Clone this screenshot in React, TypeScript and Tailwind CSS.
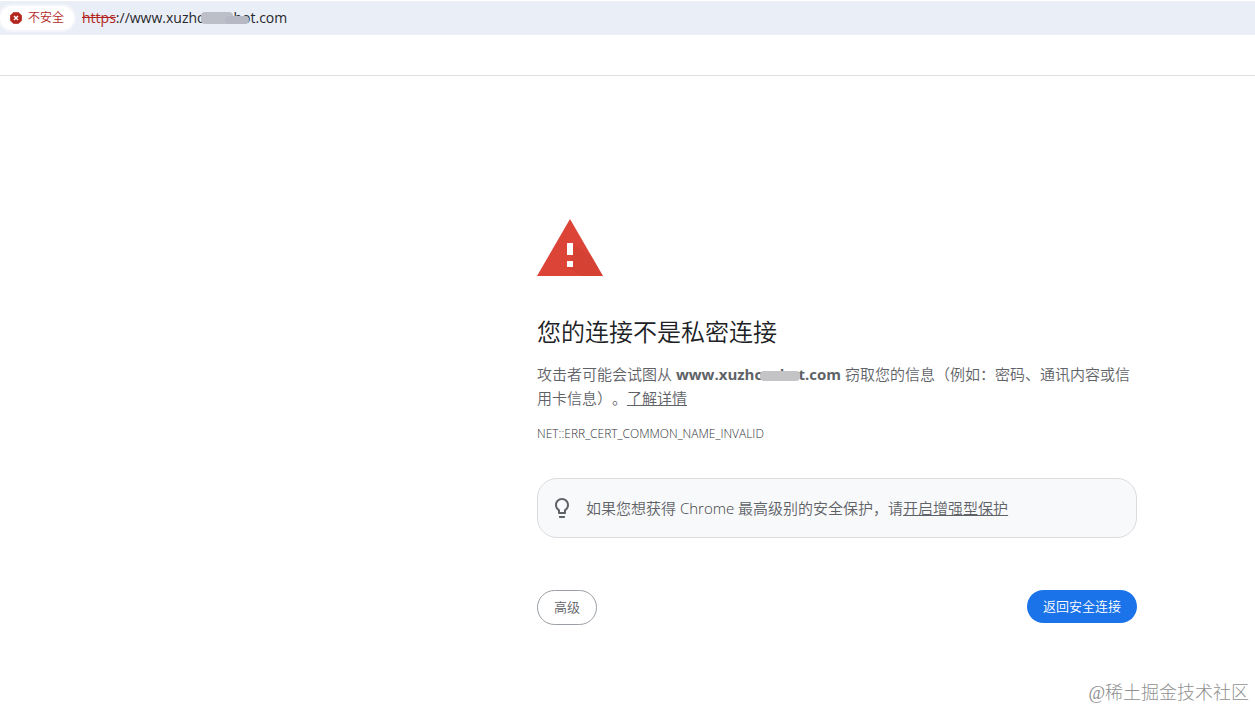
import React from 'react';

const bodyFont = "font-['Open_Sans','Noto_Sans_CJK_SC',sans-serif]";

function AddressBar() {
  return (
    <header className="border-b border-[#dfe0e3] pb-10 pt-px">
      <div className="flex h-[34px] items-center bg-[#eaeef7]">
        <button
          type="button"
          className="flex h-6 shrink-0 items-center gap-1.5 rounded-full bg-white pl-2.5 pr-2.5 text-xs font-[350] text-[#b3261e] ring-2 ring-[#f3f5fa]"
        >
          <svg viewBox="0 0 12 12" className="h-3 w-3" aria-hidden="true">
            <path
              d="M3.6 0.2h4.8l3.4 3.4v4.8l-3.4 3.4H3.6L0.2 8.4V3.6z"
              fill="#b3261e"
              stroke="#b3261e"
              strokeWidth="0.4"
              strokeLinejoin="round"
            />
            <path d="M4 4l4 4M8 4l-4 4" stroke="#fff" strokeWidth="1.4" />
          </svg>
          不安全
        </button>
        <p className="flex items-center pl-2 text-sm text-[#26282b]">
          <span className="text-[#b3261e] line-through">https</span>
          <span>://www.xuzho</span>
          <span className="relative -ml-1 -mr-4 h-3 w-12">
            <span className="absolute left-0 top-0 h-3 w-8 rounded-sm bg-[#bcbfc8]" />
            <span className="absolute left-6 top-1 h-2 w-6 rounded-sm bg-[#b6b9c3]" />
          </span>
          <span>bot.com</span>
        </p>
      </div>
    </header>
  );
}

function WarningIcon() {
  return (
    <svg viewBox="0 0 66 57" className="h-[57px] w-[66px]" aria-hidden="true">
      <path d="M33 0l33 57H0z" fill="#db4437" />
      <path d="M36 24l19 14 11 19H44L30 48l6-12z" fill="#c53929" opacity="0.25" />
      <path d="M30 24h6v12h-6zM30 42h6v6h-6z" fill="#fff" />
    </svg>
  );
}

function BulbIcon() {
  return (
    <svg viewBox="0 0 24 24" className="h-6 w-6 shrink-0" fill="#5f6368" aria-hidden="true">
      <path d="M9 21c0 .5.4 1 1 1h4c.6 0 1-.5 1-1v-1H9v1zm3-19C8.100 2 5 5.100 5 9c0 2.400 1.200 4.500 3 5.700V17c0 .5.4 1 1 1h6c.6 0 1-.5 1-1v-2.300c1.800-1.300 3-3.400 3-5.700 0-3.900-3.100-7-7-7zm2.900 11.100l-.9.600V16h-4v-2.300l-.9-.6C7.800 12.200 7 10.600 7 9c0-2.800 2.200-5 5-5s5 2.200 5 5c0 1.600-.8 3.200-2.100 4.100z" />
    </svg>
  );
}

export default function App() {
  return (
    <div className={`min-h-screen bg-white text-[#5f6368] [text-spacing-trim:space-all] ${bodyFont}`}>
      <AddressBar />

      <main className="flex justify-end pr-[118px] pt-[143px]">
        <div className="w-full max-w-[600px] font-[350]">
          <WarningIcon />

          <h1 className="mt-10 text-2xl leading-8 text-[#202124]">您的连接不是私密连接</h1>

          <p className="mt-3.5 text-[15px] leading-6">
            攻击者可能会试图从{' '}
            <strong className="font-bold">
              www.xuzho
              <span className="relative -ml-1 -mr-5 inline-block h-2.5 w-10 rounded-sm bg-[#c4c4c6] align-middle" />
              bot.com
            </strong>{' '}
            窃取您的信息（例如：密码、通讯内容或信用卡信息）。
            <a href="#details" className="underline">了解详情</a>
          </p>

          <p className="mt-3 text-xs leading-6 font-light text-[#303338]">NET::ERR_CERT_COMMON_NAME_INVALID</p>

          {/* Enhanced protection hint */}
          <section className="mt-8 flex items-center gap-3 rounded-[20px] border border-[#dadce0] bg-[#f8f9fa] px-3 py-[17px]">
            <BulbIcon />
            <p className="text-[15px] leading-6">
              如果您想获得 <span className="text-[#3c4043]">Chrome</span> 最高级别的安全保护，请
              <a href="#enhanced" className="underline">开启增强型保护</a>
            </p>
          </section>

          <div className="mt-[52px] flex items-start justify-between">
            <button type="button" className="h-[35px] rounded-full border border-[#9aa0a6] px-4 text-[13px]">
              高级
            </button>
            <button type="button" className="h-[33px] rounded-full bg-[#1a73e8] px-4 text-[13px] text-white">
              返回安全连接
            </button>
          </div>
        </div>
      </main>

      <footer className="mt-14 pr-1.5 text-right font-['Liberation_Serif','Noto_Sans_CJK_SC',serif] text-lg leading-6 font-light text-[#909090]">
        @稀土掘金技术社区
      </footer>
    </div>
  );
}
